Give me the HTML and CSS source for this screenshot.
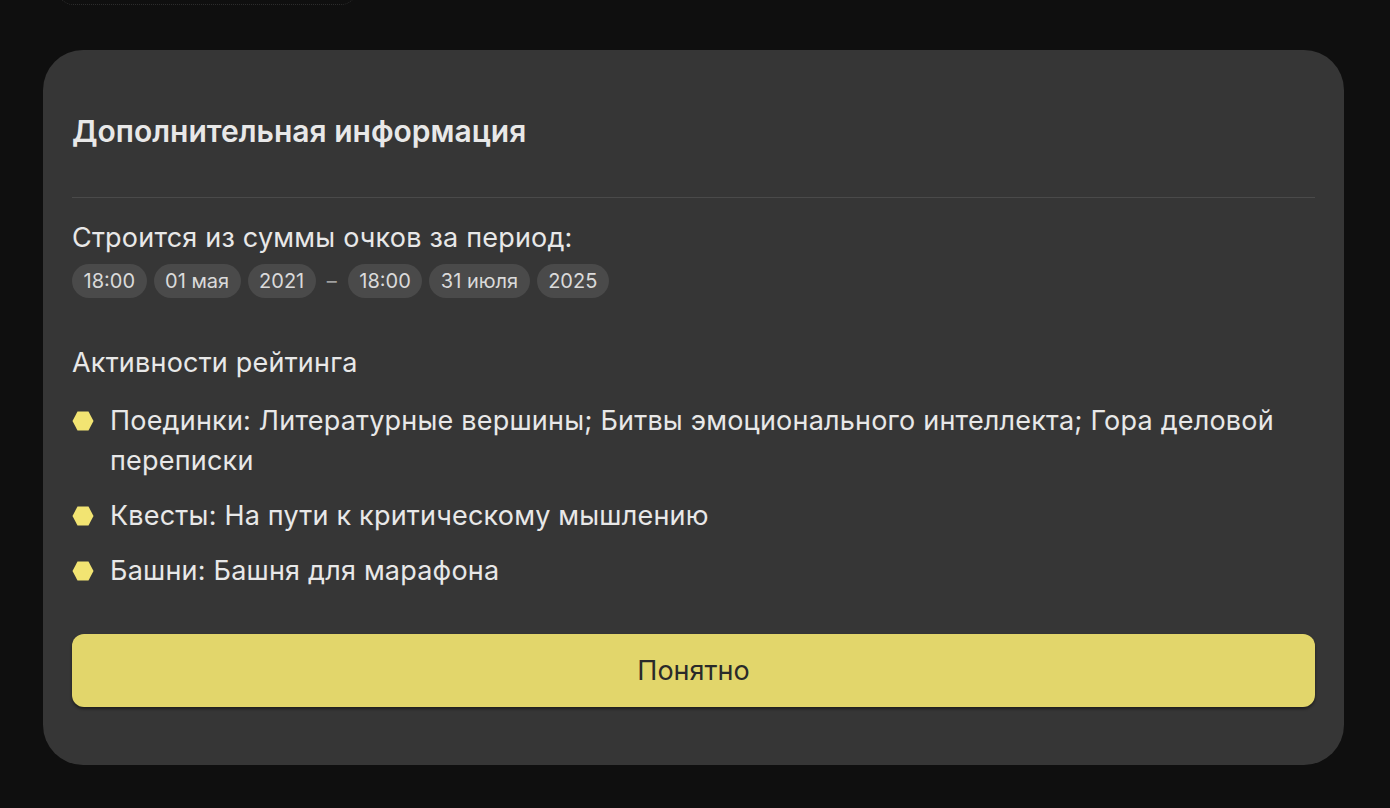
FILE: index.html
```html
<!DOCTYPE html>
<html lang="ru">
<head>
<meta charset="utf-8">
<link rel="stylesheet" href="styles.css">
</head>
<body>
<div class="page">
  <div class="ghost"></div>
  <section class="card">
    <h2 class="title">Дополнительная информация</h2>
    <hr class="divider">
    <p class="label">Строится из суммы очков за период:</p>
    <div class="period">
      <span class="pill">18:00</span>
      <span class="pill">01 мая</span>
      <span class="pill">2021</span>
      <span class="dash">–</span>
      <span class="pill">18:00</span>
      <span class="pill">31 июля</span>
      <span class="pill">2025</span>
    </div>
    <p class="label label-act">Активности рейтинга</p>
    <ul class="acts">
      <li class="act"><svg class="hex" viewBox="0 0 22 20"><polygon points="5.5,0.5 16.5,0.5 21.5,10 16.5,19.5 5.5,19.5 0.5,10"/></svg><span>Поединки: Литературные вершины; Битвы эмоционального интеллекта; Гора деловой переписки</span></li>
      <li class="act"><svg class="hex" viewBox="0 0 22 20"><polygon points="5.5,0.5 16.5,0.5 21.5,10 16.5,19.5 5.5,19.5 0.5,10"/></svg><span>Квесты: На пути к критическому мышлению</span></li>
      <li class="act"><svg class="hex" viewBox="0 0 22 20"><polygon points="5.5,0.5 16.5,0.5 21.5,10 16.5,19.5 5.5,19.5 0.5,10"/></svg><span>Башни: Башня для марафона</span></li>
    </ul>
    <button class="ok" type="button">Понятно</button>
  </section>
</div>
</body>
</html>
```

FILE: styles.css
```css
* { box-sizing: border-box; }
html, body { margin: 0; padding: 0; }
body {
  background: #0f0f0f;
  font-family: "Inter", "Roboto", "Noto Sans", sans-serif;
  color: #e6e6e6;
  height: 808px;
  overflow: hidden;
}
.page {
  padding: 0 46px 0 43px;
}
.ghost {
  width: 300px;
  height: 22px;
  margin: -17px 0 0 14px;
  border: 1px dotted #2c2c2c;
  border-radius: 0 0 16px 16px;
}
.card {
  margin-top: 45px;
  background: #363636;
  border-radius: 40px;
  padding: 65px 29px 58px;
}
.title {
  margin: 0;
  font-size: 30px;
  line-height: 32px;
  font-weight: 600;
  color: #e8e8e8;
}
.divider {
  margin: 50px 0 0;
  border: 0;
  height: 1px;
  background: #4a4a4a;
}
.label {
  margin: 25px 0 0;
  font-size: 27px;
  line-height: 30px;
  font-weight: 400;
  letter-spacing: 0.2px;
  color: #e8e8e8;
}
.period {
  margin-top: 11px;
  display: flex;
  align-items: center;
  gap: 7px;
}
.pill {
  height: 34px;
  padding: 0 11.5px;
  border-radius: 17px;
  background: #4a4a4a;
  font-size: 20px;
  line-height: 34px;
  color: #dadada;
}
.dash {
  color: #a0a0a0;
  font-size: 20px;
  margin: 0 4px;
}
.label-act {
  margin-top: 50px;
}
.acts {
  list-style: none;
  margin: 23px 0 0;
  padding: 0;
  display: flex;
  flex-direction: column;
  gap: 15px;
}
.act {
  display: flex;
  align-items: flex-start;
  gap: 16px;
  font-size: 27px;
  line-height: 40px;
  letter-spacing: 0.2px;
  color: #e8e8e8;
}
.hex {
  flex: none;
  width: 22px;
  height: 20px;
  margin-top: 10px;
  fill: #f2e472;
}
.ok {
  display: block;
  width: 100%;
  margin-top: 43px;
  height: 73px;
  border: 0;
  border-radius: 12px;
  background: #e2d66b;
  box-shadow: 0 2px 3px rgba(0,0,0,0.45);
  font-family: inherit;
  font-size: 27px;
  color: #2a2a2a;
  cursor: pointer;
}
```
